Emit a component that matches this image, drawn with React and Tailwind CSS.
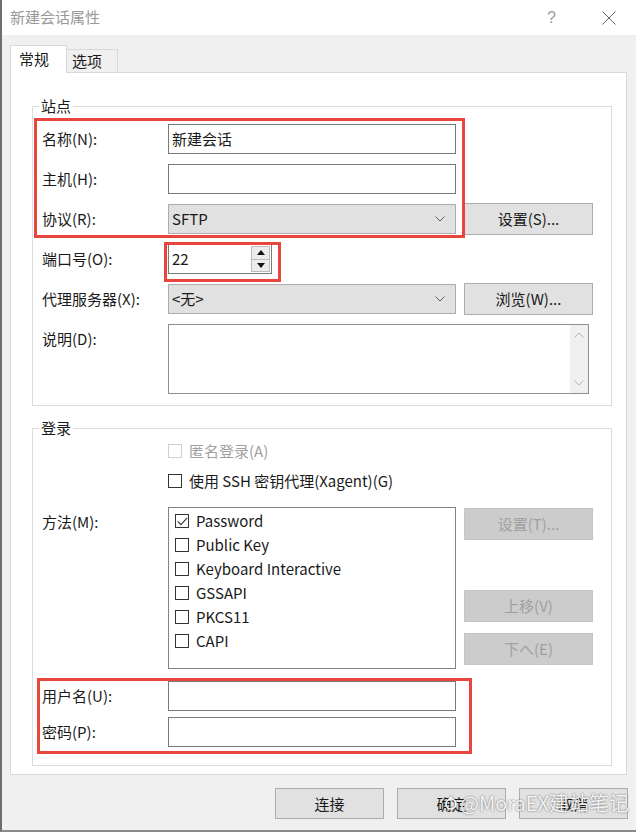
import React from "react";

function Field({ className = "", children }) {
  return (
    <div className={`h-[30px] bg-white border border-[#7a7a7a] flex items-center px-[3px] ${className}`}>
      {children}
    </div>
  );
}

function Chevron({ up = false, color = "#606060" }) {
  return (
    <svg width="10" height="6" viewBox="0 0 10 6" className={up ? "rotate-180" : ""}>
      <path d="M0.5 0.5 L5 5 L9.5 0.5" fill="none" stroke={color} strokeWidth="1" />
    </svg>
  );
}

function Select({ value }) {
  return (
    <div className="w-[288px] h-[30px] bg-[#e1e1e1] border border-[#adadad] flex items-center pl-[3px] pr-[10px]">
      <span>{value}</span>
      <span className="ml-auto">
        <Chevron />
      </span>
    </div>
  );
}

function Btn({ children, disabled = false, className = "" }) {
  return (
    <div
      className={`w-[129px] h-[32px] flex items-center justify-center border ${
        disabled ? "bg-[#cccccc] border-[#c4c4c4] text-[#a0a0a0]" : "bg-[#e1e1e1] border-[#adadad]"
      } ${className}`}
    >
      {children}
    </div>
  );
}

function Check({ checked = false, disabled = false }) {
  return (
    <div
      className={`w-[14px] h-[14px] shrink-0 border bg-white flex items-center justify-center ${
        disabled ? "border-[#cfcfcf]" : "border-[#333333]"
      }`}
    >
      {checked && (
        <svg width="11" height="9" viewBox="0 0 11 9">
          <path d="M0.8 4.4 L3.9 7.6 L10.2 0.8" fill="none" stroke="#333" strokeWidth="1.1" />
        </svg>
      )}
    </div>
  );
}

function Row({ label, children, className = "" }) {
  return (
    <div className={`flex items-center h-[30px] ${className}`}>
      <div className="w-[126px]">{label}</div>
      {children}
    </div>
  );
}

function Group({ title, className = "", children }) {
  return (
    <div className={`relative border border-[#dcdcdc] pl-[9px] ${className}`}>
      <div className="absolute -top-[11px] left-[6px] bg-white px-[2px] leading-[20px]">{title}</div>
      {children}
    </div>
  );
}

export default function App() {
  const methods = [
    ["Password", true],
    ["Public Key", false],
    ["Keyboard Interactive", false],
    ["GSSAPI", false],
    ["PKCS11", false],
    ["CAPI", false],
  ];

  return (
    <div className="relative w-[636px] h-[832px] overflow-hidden bg-[#f0f0f0] border-l-2 border-b-2 border-l-[#6e6e6e] border-b-[#8a8a8a] font-['Noto_Sans_CJK_SC',sans-serif] text-[15px] leading-[20px] text-[#1a1a1a]">
      {/* title bar */}
      <div className="h-[35px] bg-white flex items-center pl-[8px] pr-[20px] text-[#999999]">
        <span className="-mt-[1px]">新建会话属性</span>
        <span className="ml-auto mr-[46px] text-[16px] font-['Liberation_Sans',sans-serif]">?</span>
        <svg width="14" height="14" viewBox="0 0 14 14">
          <path d="M0.5 0.5 L13.5 13.5 M13.5 0.5 L0.5 13.5" stroke="#666" strokeWidth="1" />
        </svg>
      </div>

      <div className="pl-[8px] pr-[9px] pt-[10px]">
        {/* tabs */}
        <div className="flex items-end h-[28px]">
          <div className="relative z-10 h-[28px] w-[57px] bg-white border border-b-0 border-[#d9d9d9] pl-[8px] pt-[3px]">
            常规
          </div>
          <div className="h-[24px] w-[51px] border border-l-0 border-b-0 border-[#d9d9d9] pl-[5px] pt-[1px]">
            选项
          </div>
        </div>

        {/* panel */}
        <div className="-mt-px h-[703px] bg-white border border-[#d9d9d9] pl-[21px] pr-[14px] pt-[33px]">
          <Group title="站点" className="h-[300px] pt-[17px]">
            <Row label="名称(N):">
              <Field className="w-[288px]">新建会话</Field>
            </Row>
            <Row label="主机(H):" className="mt-[10px]">
              <Field className="w-[288px]" />
            </Row>
            <Row label="协议(R):" className="mt-[10px]">
              <Select value="SFTP" />
              <Btn className="ml-[8px]">设置(S)...</Btn>
            </Row>
            <Row label="端口号(O):" className="mt-[10px]">
              <div className="w-[104px] h-[30px] bg-white border border-[#7a7a7a] flex items-center pl-[3px] pr-[1px]">
                <span>22</span>
                <div className="ml-auto w-[19px] h-[26px] flex flex-col">
                  <div className="flex-1 border border-[#bdbdbd] bg-[#ececec] flex items-center justify-center">
                    <svg width="8" height="5" viewBox="0 0 8 5">
                      <path d="M0 5 L4 0 L8 5 Z" fill="#111" />
                    </svg>
                  </div>
                  <div className="flex-1 border border-t-0 border-[#bdbdbd] bg-[#ececec] flex items-center justify-center">
                    <svg width="8" height="5" viewBox="0 0 8 5">
                      <path d="M0 0 L4 5 L8 0 Z" fill="#111" />
                    </svg>
                  </div>
                </div>
              </div>
            </Row>
            <Row label="代理服务器(X):" className="mt-[10px]">
              <Select value="<无>" />
              <Btn className="ml-[8px]">浏览(W)...</Btn>
            </Row>
            <div className="flex mt-[10px]">
              <div className="w-[126px] h-[30px] flex items-center">说明(D):</div>
              <div className="w-[421px] h-[70px] bg-white border border-[#8f8f8f] flex justify-end">
                <div className="w-[18px] h-full bg-[#f0f0f0] flex flex-col items-center justify-between py-[7px]">
                  <Chevron up color="#b5b5b5" />
                  <Chevron color="#b5b5b5" />
                </div>
              </div>
            </div>
          </Group>

          <Group title="登录" className="h-[338px] mt-[22px] pt-[12px]">
            <div className="flex items-center h-[20px]">
              <div className="w-[126px]" />
              <Check disabled />
              <span className="ml-[7px] text-[#a0a0a0]">匿名登录(A)</span>
            </div>
            <div className="flex items-center h-[20px] mt-[10px]">
              <div className="w-[126px]" />
              <Check />
              <span className="ml-[7px]">使用 SSH 密钥代理(Xagent)(G)</span>
            </div>
            <div className="flex mt-[16px]">
              <div className="w-[126px] h-[30px] flex items-center">方法(M):</div>
              <div className="w-[288px] h-[162px] bg-white border border-[#828282] pt-[1px] pl-[6px]">
                {methods.map(([name, on]) => (
                  <div key={name} className="h-[24px] flex items-center">
                    <Check checked={on} />
                    <span className="ml-[7px]">{name}</span>
                  </div>
                ))}
              </div>
              <div className="ml-[8px] flex flex-col">
                <Btn disabled className="mt-[1px]">设置(T)...</Btn>
                <Btn disabled className="mt-[50px]">上移(V)</Btn>
                <Btn disabled className="mt-[11px]">下へ(E)</Btn>
              </div>
            </div>
            <Row label="用户名(U):" className="mt-[12px]">
              <Field className="w-[288px]" />
            </Row>
            <Row label="密码(P):" className="mt-[6px]">
              <Field className="w-[288px]" />
            </Row>
          </Group>
        </div>
      </div>

      {/* dialog buttons */}
      <div className="flex justify-end gap-[13px] pr-[8px] mt-[13px]">
        {["连接", "确定", "取消"].map((t) => (
          <div
            key={t}
            className="w-[109px] h-[31px] bg-[#e1e1e1] border border-[#adadad] flex items-center justify-center"
          >
            {t}
          </div>
        ))}
      </div>

      {/* red annotation boxes */}
      <div className="absolute left-[32px] top-[118px] w-[431px] h-[120px] border-[3px] border-[#e8453c]" />
      <div className="absolute left-[162px] top-[242px] w-[117px] h-[40px] border-[3px] border-[#e8453c]" />
      <div className="absolute left-[35px] top-[678px] w-[435px] h-[76px] border-[3px] border-[#e8453c]" />

      {/* watermark */}
      <div className="absolute left-[442px] top-[790px] flex items-center gap-[2px] text-white/90 text-[20px] leading-[26px] [text-shadow:0_0_2px_rgba(0,0,0,0.6)]">
        <svg width="14" height="14" viewBox="0 0 14 14" className="drop-shadow-[0_0_1px_rgba(0,0,0,0.6)]">
          <circle cx="7" cy="8" r="5" fill="none" stroke="#fff" strokeWidth="1.6" />
          <path d="M5 3 L8 0.8" stroke="#fff" strokeWidth="1.6" />
        </svg>
        <span>@MoraEX建站笔记</span>
      </div>
    </div>
  );
}
